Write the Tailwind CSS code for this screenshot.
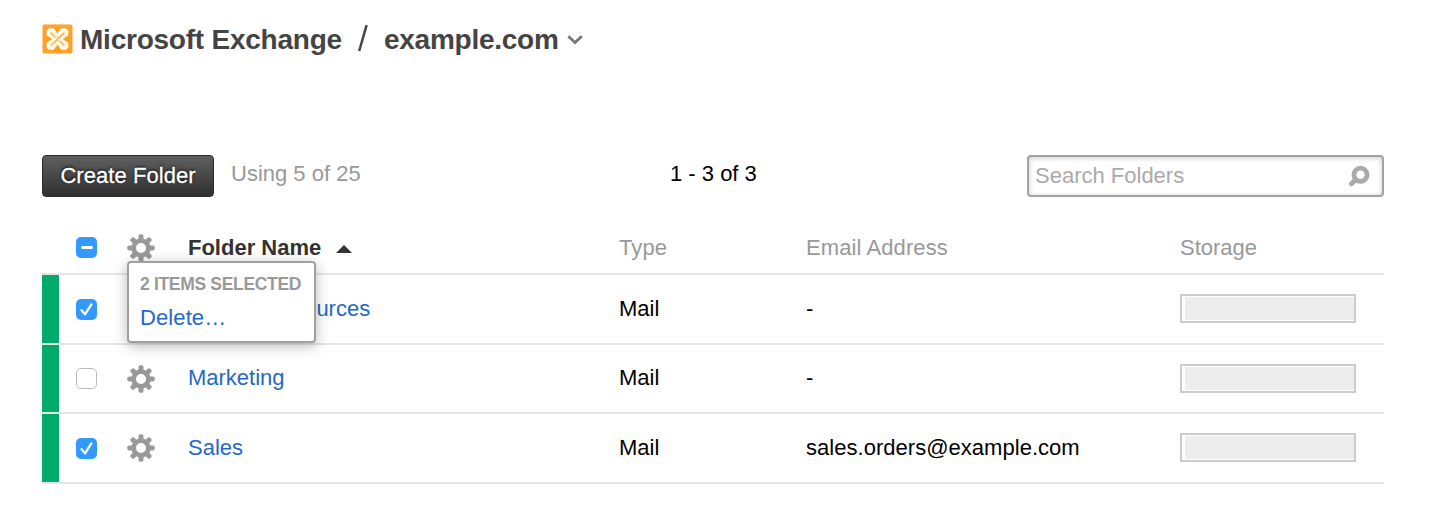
<!DOCTYPE html>
<html lang="en">
<head>
<meta charset="utf-8">
<title>Microsoft Exchange - Folders</title>
<script src="https://cdn.jsdelivr.net/npm/@tailwindcss/browser@4"></script>
</head>
<body class="bg-white w-[1430px] h-[530px] overflow-hidden font-['Liberation_Sans',Arial,sans-serif] text-[22px] leading-[26px] text-black whitespace-nowrap">
<svg class="hidden">
  <symbol id="gear" viewBox="-14 -14 28 28">
    <g fill="#999">
      <g id="teeth"><rect x="-2.500" y="-13.700" width="5" height="27.400" rx="1.800"/><rect x="-13.700" y="-2.500" width="27.400" height="5" rx="1.800"/></g>
      <use href="#teeth" transform="rotate(45)"/>
      <circle r="9.700"/>
    </g>
    <circle r="5" fill="#fff"/>
  </symbol>
  <symbol id="check" viewBox="0 0 21 21"><path d="M5.600 11.200 9 15.400 15.400 5.400" fill="none" stroke="#fff" stroke-width="2.300" stroke-linecap="round" stroke-linejoin="round"/></symbol>
</svg>
<div class="ml-[42px] w-[1342px]">
  <header class="flex h-[76px] items-center pt-[3px] text-[28px] leading-8 font-bold text-[#444]">
    <svg class="w-[31px] h-[30px] mr-[7px] -mt-0.5" viewBox="-15.500 -15 31 30">
      <rect x="-15" y="-14.500" width="30" height="29" rx="2" fill="#ff9d1c"/>
      <rect x="-13.200" y="-12.700" width="26.400" height="25.400" rx="1" fill="none" stroke="#ffac40"/>
      <g fill="#fffbe8" stroke="#fffbe8" stroke-width="1.400" stroke-linejoin="round">
        <path d="M0-4-4-10H-8.500L-10.200-8.300V-4L-4.200 0Z"/>
        <path d="M0-4 4-10H8.500L10.200-8.300V-4L4.200 0Z"/>
        <path d="M0 4-4 10H-8.500L-10.200 8.300V4L-4.200 0Z"/>
        <path d="M0 4 4 10H8.500L10.200 8.300V4L4.200 0Z"/>
        <path d="M-4 0 0-4 4 0 0 4Z"/>
      </g>
      <path d="M-6.500-6-3-2.500M6.500 6 3 2.500M6.500-6-4 4M-6.500 6-5.500 5" stroke="#ffab3c" stroke-width="1.500" stroke-linecap="round"/>
      <path d="M-3-2.500 1.200-.8M3 2.500-1.200.8" stroke="#ffc36b" stroke-width="1"/>
    </svg>
    <h1 class="tracking-[-0.23px]">Microsoft Exchange</h1>
    <svg class="w-3 h-7 ml-[15px] -mt-1" viewBox="0 0 12 28"><path d="M9.600 1.200 2.200 27" stroke="#444" stroke-width="2.500"/></svg>
    <span class="ml-[15px] tracking-[-0.25px]">example.com</span>
    <svg class="w-4 h-3 ml-[8px]" viewBox="0 0 16 12"><path d="M1.300 2.200 8 8.500 14.700 2.200" fill="none" stroke="#777" stroke-width="2.800"/></svg>
  </header>

  <section class="mt-[78px] flex h-[44px] items-start">
    <button class="mt-px h-[42px] w-[172px] rounded-[4px] border border-[#2b2b2b] bg-linear-to-b from-[#606060] to-[#303030] text-white tracking-[0.05px] [text-shadow:0_-1px_3px_#000] [-webkit-text-stroke:0.3px_white]">Create Folder</button>
    <span class="mt-[7px] ml-[17px] w-[439px] text-[#999]">Using 5 of 25</span>
    <span class="mt-[7px]">1 - 3 of 3</span>
    <div class="ml-auto mt-px flex h-[42px] w-[357px] items-center justify-between rounded-[4px] border-2 border-[#a3a3a3] pl-[6px] pr-[12px] text-[#aaa] shadow-[inset_0_1px_5px_rgba(0,0,0,0.22)]">
      <span>Search Folders</span>
      <svg class="size-[22px]" viewBox="0 0 22 22" fill="none" stroke="#aaa"><circle cx="12.500" cy="9.800" r="6.600" stroke-width="4.800"/><path d="M7.500 15 3.500 18.800" stroke-width="5" stroke-linecap="round"/></svg>
    </div>
  </section>

  <main>
    <div class="relative grid h-[77px] grid-cols-[34.400px_50.600px_61px_431px_187px_374px_1fr] items-center border-b-2 border-[#e5e5e5] pt-[24px] text-[#999]">
      <i></i>
      <span class="flex size-[21px] items-center justify-center rounded-[5px] bg-[#3399ff]"><i class="h-[3px] w-3 rounded-full bg-white"></i></span>
      <svg class="size-7"><use href="#gear"/></svg>
      <span class="flex items-center font-bold text-[#333]">Folder Name<svg class="ml-[15px] mt-[3px] h-2 w-4" viewBox="0 0 16 8"><path d="M8 0 16 8H0Z" fill="#333"/></svg></span>
      <span class="tracking-[0.1px]">Type</span><span class="tracking-[0.1px]">Email Address</span><span>Storage</span>
      <div class="absolute left-[85px] top-[63px] z-10 h-[82px] w-[189px] rounded-[4px] border-2 border-[#a0a0a0] bg-white pl-[11px] pt-[8px] shadow-[0_3px_14px_rgba(0,0,0,0.28)]">
        <div class="text-[17.500px] leading-[26px] font-bold tracking-[-0.320px]">2 ITEMS SELECTED</div>
        <a class="mt-[8px] block tracking-[0.1px] text-[#2469c6]">Delete…</a>
      </div>
    </div>
    <div class="grid h-[70px] grid-cols-[34.400px_50.600px_61px_431px_187px_374px_1fr] items-center border-b-2 border-[#e5e5e5]">
      <i class="h-full w-[17px] bg-[#00aa6c]"></i>
      <svg class="size-[21px] rounded-[5px] bg-[#3399ff]"><use href="#check"/></svg>
      <svg class="size-7"><use href="#gear"/></svg>
      <a class="text-[#2469c6]">Human Resources</a><span>Mail</span><span>-</span>
      <span class="-mt-px flex h-[29px] w-[176px] border-2 border-[#ccc] pl-[3px] py-px"><i class="w-full bg-[#ededed]"></i></span>
    </div>
    <div class="grid h-[69px] grid-cols-[34.400px_50.600px_61px_431px_187px_374px_1fr] items-center border-b-2 border-[#e5e5e5]">
      <i class="h-full w-[17px] bg-[#00aa6c]"></i>
      <span class="size-[21px] rounded-[5px] border-[1.500px] border-[#bbb] bg-white"></span>
      <svg class="size-7"><use href="#gear"/></svg>
      <a class="-mt-px text-[#2469c6]">Marketing</a><span class="-mt-px">Mail</span><span class="-mt-px">-</span>
      <span class="-mt-px flex h-[29px] w-[176px] border-2 border-[#ccc] pl-[3px] py-px"><i class="w-full bg-[#ededed]"></i></span>
    </div>
    <div class="grid h-[70px] grid-cols-[34.400px_50.600px_61px_431px_187px_374px_1fr] items-center border-b-2 border-[#e5e5e5]">
      <i class="h-full w-[17px] bg-[#00aa6c]"></i>
      <svg class="size-[21px] rounded-[5px] bg-[#3399ff]"><use href="#check"/></svg>
      <svg class="size-7"><use href="#gear"/></svg>
      <a class="text-[#2469c6]">Sales</a><span>Mail</span><span class="tracking-[0.03px]">sales.orders@example.com</span>
      <span class="-mt-px flex h-[29px] w-[176px] border-2 border-[#ccc] pl-[3px] py-px"><i class="w-full bg-[#ededed]"></i></span>
    </div>
  </main>
</div>
</body>
</html>
